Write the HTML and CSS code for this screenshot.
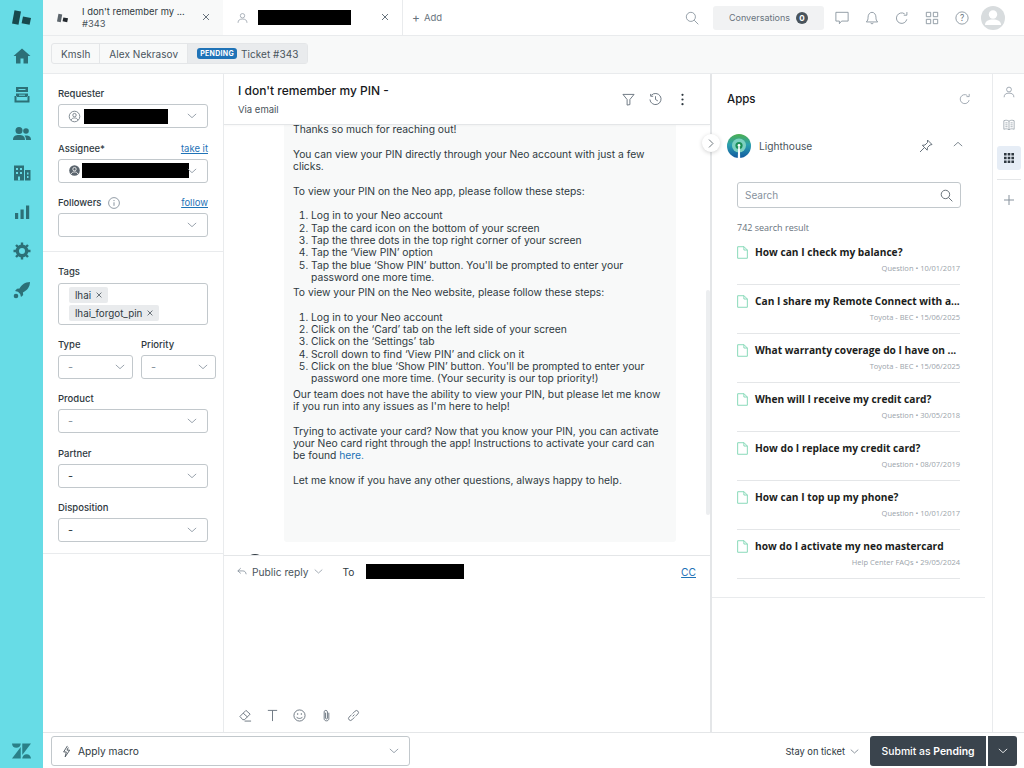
FILE: index.html
```html
<!DOCTYPE html>
<html lang="en">
<head>
<meta charset="utf-8">
<title>Ticket #343</title>
<link rel="stylesheet" href="styles.css">
</head>
<body>
<svg class="defs" aria-hidden="true">
  <symbol id="chev" viewBox="0 0 12 12"><path d="M1 3.500l5 4.500 5-4.500" fill="none" stroke="currentColor" stroke-width="1"/></symbol>
  <symbol id="x" viewBox="0 0 10 10"><path d="M2 2l6 6M8 2l-6 6" fill="none" stroke="currentColor" stroke-width="1"/></symbol>
  <symbol id="mag" viewBox="0 0 16 16"><circle cx="6.700" cy="6.700" r="5.200" fill="none" stroke="currentColor"/><path d="M10.500 10.500l4.700 4.700" stroke="currentColor" fill="none"/></symbol>
  <symbol id="refresh" viewBox="0 0 16 16"><path d="M13.500 9.500A6 6 0 1 1 11 3.200" fill="none" stroke="currentColor"/><path d="M13.600 1.200v3.600H10" fill="none" stroke="currentColor"/></symbol>
  <symbol id="person" viewBox="0 0 16 16"><circle cx="8" cy="4.700" r="3.200" fill="none" stroke="currentColor"/><path d="M1.500 15c0-4 2.500-5.500 6.500-5.500s6.500 1.500 6.500 5.500" fill="none" stroke="currentColor"/></symbol>
  <symbol id="docsym" viewBox="0 0 12 14"><path d="M.7.7h7l3.600 3.600v9H.7z" fill="none" stroke="#7fd6b4"/><path d="M7.500.7v3.600h3.800" fill="none" stroke="#7fd6b4"/></symbol>
</svg>
<div class="app">
  <nav class="side">
    <svg class="logo" viewBox="11 10 19 15"><path d="M13.500 10.300L20 11.500 17.500 24.800 11 23.500z" fill="#17494d"/><path d="M22 16.500l8 1.500-1.400 6.800-8-1.500z" fill="#17494d"/></svg>
    <svg class="nav-ic" viewBox="0 0 18 18"><path d="M9 1.500L0.500 9h2.500v7.500h4.500v-5h3v5H15V9h2.500z" fill="#2c7077"/></svg>
    <svg class="nav-ic" viewBox="0 0 18 18"><path d="M3 1h12v5H3zM3 7.500h12V11H3zM1.500 10v6.500h15V10h-2v4.500h-11V10z" fill="#2c7077"/><path d="M5.500 3.500h7M6 9.200h6" stroke="#67dce6"/></svg>
    <svg class="nav-ic" viewBox="0 0 18 18"><circle cx="6" cy="5.500" r="3.500" fill="#2c7077"/><circle cx="13" cy="6" r="2.800" fill="#2c7077"/><path d="M0 15c0-4 2.500-5 6-5s6 1 6 5zM13 15h5c0-3.500-2-4.500-5-4.500-1 0-1.500.2-1.500.2 1 1 1.500 2.500 1.500 4.300z" fill="#2c7077"/></svg>
    <svg class="nav-ic" viewBox="0 0 18 18"><path d="M1 1.500h10v15H1zM12 6h5.500v10.500H12z" fill="#2c7077"/><path d="M3 4h2v2H3zM7 4h2v2H7zM3 8h2v2H3zM7 8h2v2H7zM5 12.500h2v4H5zM14 8.500h1.500v2H14zM14 12h1.500v2H14z" fill="#67dce6"/></svg>
    <svg class="nav-ic" viewBox="0 0 18 18"><path d="M2 10h3.200v6H2zM7.500 6.500h3.200V16H7.500zM13 2.500h3.200V16H13z" fill="#2c7077"/></svg>
    <svg class="nav-ic" viewBox="0 0 18 18"><circle cx="9" cy="9" r="4.700" fill="none" stroke="#2c7077" stroke-width="3.400"/><path d="M9 .5v3M9 14.500v3M.5 9h3M14.500 9h3M3 3l2.200 2.200M12.800 12.800L15 15M3 15l2.200-2.200M12.800 5.200L15 3" stroke="#2c7077" stroke-width="2.400"/></svg>
    <svg class="nav-ic" viewBox="0 0 18 18"><path d="M17 1c-5 .2-8 2.500-10.500 6.500L4 7.800 2 10l3 .8 2.200 2.200.8 3 2.200-2-.3-2.500C14.500 9 16.800 6 17 1z" fill="#2c7077"/><circle cx="3" cy="15" r="2.300" fill="#2c7077"/></svg>
    <svg class="zlogo" viewBox="0 0 20 16"><path d="M9.200 3.800V16H0zM9.200 0c0 2.600-2 4.700-4.600 4.700S0 2.600 0 0zM10.800 16c0-2.600 2-4.700 4.600-4.700S20 13.400 20 16zM10.800 12.200V0H20z" fill="#2a8088"/></svg>
  </nav>
  <div class="main">
    <header class="topbar">
      <div class="tab tab-active">
        <svg class="tab-logo" viewBox="11 10 19 15"><path d="M13.500 10.300L20 11.500 17.500 24.800 11 23.500z" fill="#5d666d"/><path d="M22 16.500l8 1.500-1.400 6.800-8-1.500z" fill="#23292e"/></svg>
        <div class="tab-text"><div class="tab-title">I don't remember my ...</div><div class="tab-sub">#343</div></div>
        <svg class="tab-x"><use href="#x"/></svg>
      </div>
      <div class="tab tab-user">
        <svg class="tab-person"><use href="#person"/></svg>
        <span class="redact redact-tab"></span>
        <svg class="tab-x"><use href="#x"/></svg>
      </div>
      <div class="add"><span class="plus">+</span> Add</div>
      <div class="top-right">
        <svg class="top-ic"><use href="#mag"/></svg>
        <div class="conv">Conversations <span class="conv-badge">0</span></div>
        <svg class="top-ic" viewBox="0 0 16 16"><path d="M1 1.500h14v10H7.500L5 14.500v-3H1z" fill="none" stroke="currentColor"/></svg>
        <svg class="top-ic" viewBox="0 0 16 16"><path d="M1.500 12.500c1.500-1.500 2-2.500 2-5.500S5.500 1.500 8 1.500 12.500 4 12.500 7s.5 4 2 5.500zM6.500 13.500c.3 1.500 2.700 1.500 3 0" fill="none" stroke="currentColor"/></svg>
        <svg class="top-ic"><use href="#refresh"/></svg>
        <svg class="top-ic" viewBox="0 0 16 16"><path d="M1.500 1.500h5v5h-5zM9.500 1.500h5v5h-5zM1.500 9.500h5v5h-5zM9.500 9.500h5v5h-5z" fill="none" stroke="currentColor"/></svg>
        <svg class="top-ic" viewBox="0 0 16 16"><circle cx="8" cy="8" r="7" fill="none" stroke="currentColor"/><text x="8" y="11.500" class="q">?</text></svg>
        <div class="avatar"><svg viewBox="0 0 24 24"><circle cx="12" cy="8.500" r="4.200" fill="#fff"/><path d="M4 19c0-4 3.500-5.500 8-5.500s8 1.500 8 5.500z" fill="#fff"/></svg></div>
      </div>
    </header>
    <div class="crumbbar">
      <div class="crumbs">
        <span class="crumb">Kmslh</span>
        <span class="crumb">Alex Nekrasov</span>
        <span class="crumb crumb-cur"><span class="pending">PENDING</span> Ticket #343</span>
      </div>
    </div>
    <div class="work">
      <aside class="props">
        <div class="sec sec-a">
          <div class="field">
            <div class="lab">Requester</div>
            <div class="sel"><svg class="sel-person" viewBox="0 0 16 16"><circle cx="8" cy="8" r="6.500" fill="none" stroke="#68737d"/><circle cx="8" cy="6.300" r="2.100" fill="none" stroke="#68737d"/><path d="M3.800 12.500c.8-2 2.200-2.700 4.200-2.700s3.400.7 4.200 2.700" fill="none" stroke="#68737d"/></svg><span class="redact redact-req"></span><svg class="chev"><use href="#chev"/></svg></div>
          </div>
          <div class="field">
            <div class="lab lab-row"><span>Assignee*</span><a class="lnk">take it</a></div>
            <div class="sel"><svg class="sel-person" viewBox="0 0 16 16"><circle cx="8" cy="8" r="6.500" fill="#5a646d"/><circle cx="8" cy="6.300" r="2.100" fill="none" stroke="#fff"/><path d="M3.800 12.500c.8-2 2.200-2.700 4.200-2.700s3.400.7 4.200 2.700" fill="none" stroke="#fff"/></svg><span class="redact redact-asg"></span><svg class="chev"><use href="#chev"/></svg></div>
          </div>
          <div class="field">
            <div class="lab lab-row"><span class="lab-info">Followers <svg class="info" viewBox="0 0 12 12"><circle cx="6" cy="6" r="5.400" fill="none" stroke="#87929d" stroke-width=".9"/><path d="M6 5.300v3.500M6 3v1.100" stroke="#87929d"/></svg></span><a class="lnk">follow</a></div>
            <div class="sel"><svg class="chev"><use href="#chev"/></svg></div>
          </div>
        </div>
        <div class="sec sec-b">
          <div class="field field-tags">
            <div class="lab">Tags</div>
            <div class="tagbox">
              <span class="tag">lhai <svg class="tag-x"><use href="#x"/></svg></span>
              <span class="tag">lhai_forgot_pin <svg class="tag-x"><use href="#x"/></svg></span>
            </div>
          </div>
          <div class="two">
            <div class="field"><div class="lab">Type</div><div class="sel sel-dash">-<svg class="chev"><use href="#chev"/></svg></div></div>
            <div class="field"><div class="lab">Priority</div><div class="sel sel-dash">-<svg class="chev"><use href="#chev"/></svg></div></div>
          </div>
          <div class="field"><div class="lab">Product</div><div class="sel sel-dash">-<svg class="chev"><use href="#chev"/></svg></div></div>
          <div class="field"><div class="lab">Partner</div><div class="sel sel-dash sel-dark">-<svg class="chev"><use href="#chev"/></svg></div></div>
          <div class="field"><div class="lab">Disposition</div><div class="sel sel-dash sel-dark">-<svg class="chev"><use href="#chev"/></svg></div></div>
        </div>
      </aside>
      <section class="center">
        <div class="thead">
          <div>
            <h1 class="ttitle">I don't remember my PIN -</h1>
            <div class="via">Via email</div>
          </div>
          <div class="tools">
            <svg class="tool" viewBox="0 0 14 14"><path d="M1 1.500h12L8.500 7v5.500L5.500 13V7z" fill="none" stroke="currentColor"/></svg>
            <svg class="tool" viewBox="0 0 14 14"><path d="M2.500 2.500A6 6 0 1 1 1 7" fill="none" stroke="currentColor"/><path d="M1.800 1v2.500h2.700M7 3.500V7l2.500 1.500" fill="none" stroke="currentColor"/></svg>
            <svg class="tool tool-dots" viewBox="0 0 14 14"><circle cx="7" cy="2" r="1.200"/><circle cx="7" cy="7" r="1.200"/><circle cx="7" cy="12" r="1.200"/></svg>
          </div>
        </div>
        <div class="log">
          <div class="bubble">
            <p>Thanks so much for reaching out!</p>
            <p>You can view your PIN directly through your Neo account with just a few clicks.</p>
            <p>To view your PIN on the Neo app, please follow these steps:</p>
            <ol>
              <li>Log in to your Neo account</li>
              <li>Tap the card icon on the bottom of your screen</li>
              <li>Tap the three dots in the top right corner of your screen</li>
              <li>Tap the ‘View PIN’ option</li>
              <li>Tap the blue ‘Show PIN’ button. You'll be prompted to enter your password one more time.</li>
            </ol>
            <p>To view your PIN on the Neo website, please follow these steps:</p>
            <ol>
              <li>Log in to your Neo account</li>
              <li>Click on the ‘Card’ tab on the left side of your screen</li>
              <li>Click on the ‘Settings’ tab</li>
              <li>Scroll down to find ‘View PIN’ and click on it</li>
              <li>Click on the blue ‘Show PIN’ button. You'll be prompted to enter your password one more time. (Your security is our top priority!)</li>
            </ol>
            <p>Our team does not have the ability to view your PIN, but please let me know if you run into any issues as I'm here to help!</p>
            <p>Trying to activate your card? Now that you know your PIN, you can activate your Neo card right through the app! Instructions to activate your card can be found <a class="inl">here.</a></p>
            <p>Let me know if you have any other questions, always happy to help.</p>
          </div>
          <span class="log-avatar"></span>
          <span class="scroll"></span>
        </div>
        <div class="composer">
          <div class="reply-row">
            <svg class="reply-ic" viewBox="0 0 12 10"><path d="M4.500 1L1 4.300l3.500 3M1 4.300h6c2.500 0 3.500 1.500 4 4" fill="none" stroke="#87929d"/></svg>
            <span class="reply-type">Public reply</span>
            <svg class="reply-chev"><use href="#chev"/></svg>
            <span class="to">To</span>
            <span class="redact redact-to"></span>
            <a class="lnk cc">CC</a>
          </div>
          <div class="editor">
            <svg class="ed" viewBox="0 0 14 14"><path d="M1 8l6.500-6.500 4.500 4L6 11.500H4zM4.500 4.500l4.500 4M6 13h7" fill="none" stroke="currentColor"/></svg>
            <svg class="ed" viewBox="0 0 14 14"><path d="M2 1.500h10M7 1.500V13" fill="none" stroke="currentColor"/></svg>
            <svg class="ed" viewBox="0 0 14 14"><circle cx="7" cy="7" r="6" fill="none" stroke="currentColor"/><circle cx="5" cy="5.500" r=".8" fill="currentColor"/><circle cx="9" cy="5.500" r=".8" fill="currentColor"/><path d="M3.800 8.500c1 2.200 5.400 2.200 6.400 0" fill="none" stroke="currentColor"/></svg>
            <svg class="ed" viewBox="0 0 14 14"><path d="M9.500 4v6.500c0 3-5 3-5 0V3c0-2 3.500-2 3.500 0v7c0 1-2 1-2 0V4" fill="none" stroke="currentColor"/></svg>
            <svg class="ed" viewBox="0 0 14 14"><path d="M6 8l2-2M5 6L2.300 8.700a2 2 0 0 0 3 3L8 9M6 5l2.700-2.700a2 2 0 0 1 3 3L9 8" fill="none" stroke="currentColor"/></svg>
          </div>
        </div>
        <span class="expand"><svg viewBox="0 0 10 14"><path d="M2.500 2l5 5-5 5" fill="none" stroke="#49545c"/></svg></span>
      </section>
      <section class="apps">
        <div class="apps-in">
          <div class="apps-head"><span class="apps-title">Apps</span><svg class="apps-refresh"><use href="#refresh"/></svg></div>
          <div class="lh">
            <svg class="lh-logo" viewBox="0 0 24 24"><defs><linearGradient id="lhg" x1="0" y1="0" x2="0" y2="1"><stop offset="0" stop-color="#4caf50"/><stop offset=".45" stop-color="#2a9fb0"/><stop offset="1" stop-color="#12599f"/></linearGradient></defs><circle cx="12" cy="12" r="12" fill="url(#lhg)"/><circle cx="12" cy="11.500" r="7" fill="#7cd0c0"/><circle cx="12" cy="11.500" r="3.600" fill="#1c8f57"/><circle cx="12" cy="11.500" r="1.400" fill="#fff"/><path d="M11.200 13h1.600l.4 11h-2.400z" fill="#fff"/></svg>
            <span class="lh-name">Lighthouse</span>
            <svg class="pin" viewBox="0 0 14 14"><path d="M8.500 1l4.500 4.500-2 .5-2.500 2.500-.3 2.700L3.300 6.300l2.700-.3L8.500 3.500zM5.300 8.700L1 13" fill="none" stroke="#68737d"/></svg>
            <svg class="up"><use href="#chev"/></svg>
          </div>
          <div class="search"><span>Search</span><svg class="search-ic"><use href="#mag"/></svg></div>
          <div class="count">742 search result</div>
          <ul class="results">
            <li class="res"><div class="res-t"><svg class="doc"><use href="#docsym"/></svg><span>How can I check my balance?</span></div><div class="res-m">Question • 10/01/2017</div></li>
            <li class="res"><div class="res-t"><svg class="doc"><use href="#docsym"/></svg><span>Can I share my Remote Connect with a...</span></div><div class="res-m">Toyota - BEC • 15/06/2025</div></li>
            <li class="res"><div class="res-t"><svg class="doc"><use href="#docsym"/></svg><span>What warranty coverage do I have on ...</span></div><div class="res-m">Toyota - BEC • 15/06/2025</div></li>
            <li class="res"><div class="res-t"><svg class="doc"><use href="#docsym"/></svg><span>When will I receive my credit card?</span></div><div class="res-m">Question • 30/05/2018</div></li>
            <li class="res"><div class="res-t"><svg class="doc"><use href="#docsym"/></svg><span>How do I replace my credit card?</span></div><div class="res-m">Question • 08/07/2019</div></li>
            <li class="res"><div class="res-t"><svg class="doc"><use href="#docsym"/></svg><span>How can I top up my phone?</span></div><div class="res-m">Question • 10/01/2017</div></li>
            <li class="res"><div class="res-t"><svg class="doc"><use href="#docsym"/></svg><span>how do I activate my neo mastercard</span></div><div class="res-m">Help Center FAQs • 29/05/2024</div></li>
          </ul>
        </div>
      </section>
      <aside class="rail">
        <svg class="rail-ic"><use href="#person"/></svg>
        <svg class="rail-ic" viewBox="0 0 14 14"><path d="M1 2c2-.8 4-.8 6 .5 2-1.300 4-1.300 6-.5v10c-2-.8-4-.8-6 .5-2-1.300-4-1.300-6-.5zM7 2.500v10M2.800 4.500h2.500M2.800 6.800h2.500M2.800 9h2.500M8.800 4.500h2.500M8.800 6.800h2.500M8.800 9h2.500" fill="none" stroke="#87929d" stroke-width=".8"/></svg>
        <div class="rail-cur"><svg viewBox="0 0 12 12"><path d="M1 1h2.600v2.600H1zM4.700 1h2.600v2.600H4.700zM8.400 1H11v2.600H8.400zM1 4.700h2.600v2.600H1zM4.700 4.700h2.600v2.600H4.700zM8.400 4.700H11v2.600H8.400zM1 8.400h2.600V11H1zM4.700 8.400h2.600V11H4.700zM8.400 8.400H11V11H8.400z" fill="#2f3941"/></svg></div>
        <div class="rail-div"></div>
        <svg class="rail-plus" viewBox="0 0 12 12"><path d="M6 1v10M1 6h10" stroke="#87929d" fill="none"/></svg>
      </aside>
    </div>
    <footer class="foot">
      <div class="macro">
        <svg class="bolt" viewBox="0 0 10 14"><path d="M6 .8L1.800 7.500h3L3.500 13 8.500 5.500h-3l1.500-3" fill="none" stroke="#49545c"/></svg>
        <span>Apply macro</span>
        <svg class="chev"><use href="#chev"/></svg>
      </div>
      <div class="stay">Stay on ticket <svg class="stay-chev"><use href="#chev"/></svg></div>
      <div class="submit">
        <span class="sub-main">Submit as <b>Pending</b></span>
        <span class="sub-more"><svg class="sub-chev"><use href="#chev"/></svg></span>
      </div>
    </footer>
  </div>
</div>
</body>
</html>
```

FILE: styles.css
```css
* { box-sizing: border-box; }
html, body { margin: 0; padding: 0; height: 100%; }
body { font-family: Inter, "Liberation Sans", sans-serif; font-size: 11px; color: #2f3941; background: #fff; overflow: hidden; }
.defs { position: absolute; width: 0; height: 0; }
.app { display: flex; width: 1024px; height: 768px; }

.side { width: 43px; flex: none; background: #67dce6; display: flex; flex-direction: column; align-items: center; padding-top: 10px; }
.logo { width: 19px; height: 15px; margin-bottom: 22px; }
.nav-ic { width: 18px; height: 18px; margin-bottom: 21px; }
.zlogo { width: 19px; height: 16px; margin-top: auto; margin-bottom: 9px; }

.main { flex: 1; display: flex; flex-direction: column; min-width: 0; }

.topbar { height: 36px; flex: none; display: flex; border-bottom: 1px solid #e9ebed; background: #fff; }
.tab { display: flex; align-items: center; height: 35px; position: relative; }
.tab-active { width: 180px; background: #f8f9f9; padding-left: 14px; }
.tab-user { width: 180px; padding-left: 14px; border-right: 1px solid #e9ebed; }
.tab-logo { width: 11px; height: 10px; margin-right: 14px; flex: none; }
.tab-text { font-size: 9.400px; line-height: 12px; color: #2f3941; }
.tab-sub { color: #49545c; }
.tab-x { position: absolute; right: 12px; top: 12px; width: 10px; height: 10px; color: #68737d; }
.tab-person { width: 11px; height: 12px; color: #87929d; margin-right: 10px; flex: none; }
.redact { display: block; background: #000; flex: none; }
.redact-tab { width: 93px; height: 15px; }
.add { display: flex; align-items: center; gap: 4px; padding-left: 9px; font-size: 9.500px; color: #68737d; height: 35px; }
.plus { font-size: 12px; }
.top-right { margin-left: auto; display: flex; align-items: center; height: 35px; padding-right: 19px; color: #87929d; }
.top-ic { width: 14px; height: 14px; color: #87929d; margin-right: 16px; }
.top-right .top-ic:first-child { margin-right: 14px; }
.q { font-family: Inter, sans-serif; font-size: 9.500px; text-anchor: middle; fill: #68737d; }
.conv { width: 111px; height: 24px; background: #f1f2f3; border-radius: 3px; margin-right: 11px; display: flex; align-items: center; justify-content: center; gap: 6px; font-size: 9px; color: #68737d; }
.conv-badge { width: 12px; height: 12px; border-radius: 50%; background: #49545c; color: #fff; font-size: 8px; font-weight: 700; display: flex; align-items: center; justify-content: center; }
.avatar { width: 24px; height: 24px; border-radius: 50%; background: #d8dcde; margin-left: -4px; }
.avatar svg { display: block; width: 24px; height: 24px; }

.crumbbar { height: 38px; flex: none; background: #f8f9f9; border-bottom: 1px solid #e9ebed; padding: 7px 0 0 8px; }
.crumbs { display: inline-flex; height: 21px; border: 1px solid #e4e6e8; border-radius: 3px; background: #f8f9f9; font-size: 10px; letter-spacing: .05px; color: #49545c; }
.crumb { display: flex; align-items: center; padding: 0 9px; border-right: 1px solid #e4e6e8; }
.crumb-cur { background: #e9ebed; border-right: 0; gap: 4px; }
.pending { background: #1f73b7; color: #fff; font-size: 7px; font-weight: 700; border-radius: 3px; padding: 0 3px; height: 11px; line-height: 11px; letter-spacing: .3px; }

.work { flex: 1; display: flex; min-height: 0; }

.props { width: 181px; flex: none; border-right: 1px solid #e9ebed; background: #fff; }
.sec { padding: 0 15px; border-bottom: 1px solid #e9ebed; }
.sec-a { padding-top: 13px; height: 178px; }
.sec-b { padding-top: 13px; height: 302px; }
.field { margin-bottom: 13.500px; }
.field-tags { margin-bottom: 13px; }
.lab { font-size: 9.500px; line-height: 13px; color: #2f3941; font-weight: 500; margin-bottom: 4px; }
.field-tags .lab { margin-bottom: 5px; }
.lab-row { display: flex; justify-content: space-between; align-items: center; }
.lab-info { display: flex; align-items: center; gap: 7px; }
.info { width: 12px; height: 12px; }
.lnk { color: #1f73b7; text-decoration: underline; font-weight: 400; }
.sel { height: 24px; border: 1px solid #c2c8cc; border-radius: 3px; display: flex; align-items: center; padding: 0 7px 0 9px; position: relative; background: #fff; }
.sel-person { width: 13px; height: 13px; margin-right: 3px; flex: none; }
.redact-req { width: 84px; height: 15px; }
.redact-asg { width: 107px; height: 15px; margin-left: -2px; }
.chev { width: 10px; height: 10px; color: #87929d; flex: none; position: absolute; right: 10px; top: 6px; }
.sel-dash { padding-left: 9px; color: #87929d; font-size: 11px; }
.sel-dark { color: #2f3941; }
.tagbox { height: 42px; border: 1px solid #c2c8cc; border-radius: 3px; padding: 3px 10px; display: flex; flex-wrap: wrap; align-items: flex-start; gap: 2px 40px; }
.tag { display: inline-flex; align-items: center; gap: 4px; height: 16px; background: #e9ebed; border-radius: 2px; padding: 0 5px 0 6px; font-size: 9.800px; color: #2f3941; }
.tag-x { width: 8px; height: 8px; color: #49545c; }
.two { display: flex; gap: 8px; width: 158px; }
.two .field { width: 75px; flex: none; margin-bottom: 13px; }
.two .chev { right: 7px; }

.center { width: 488px; flex: none; display: flex; flex-direction: column; border-right: 2px solid #e4e6e8; position: relative; min-width: 0; }
.thead { height: 51px; flex: none; border-bottom: 1px solid #e4e6e8; display: flex; justify-content: space-between; padding: 9px 21px 0 14px; box-shadow: 0 1px 2px rgba(0,0,0,.03); position: relative; z-index: 1; background: #fff; }
.ttitle { margin: 0; font-size: 12px; line-height: 16px; font-weight: 500; color: #17191c; }
.via { font-size: 9.500px; color: #49545c; margin-top: 4px; line-height: 13px; }
.tools { display: flex; gap: 14px; align-items: center; padding-top: 2px; height: 30px; }
.tool { width: 13px; height: 13px; color: #68737d; }
.tool-dots { fill: #2f3941; }
.log { height: 431px; flex: none; position: relative; overflow: hidden; padding-left: 60px; border-bottom: 1px solid #e4e6e8; }
.bubble { width: 392px; height: 419px; margin-top: -2px; background: #f8f9f9; padding: 0 13px 0 9px; font-size: 10.300px; line-height: 12.300px; color: #2f3941; border-radius: 0 0 3px 3px; }
.bubble p { margin: 0 0 12.400px; }
.bubble ol { margin: 0 0 3px; padding: 0 0 0 18px; }
.inl { color: #1f73b7; }
.log-avatar { position: absolute; left: 21px; top: 429px; width: 20px; height: 20px; background: #2f3941; border-radius: 50%; }
.scroll { position: absolute; right: 0; top: 165px; width: 4px; height: 225px; background: #eceef0; border-radius: 2px; }
.composer { flex: 1; display: flex; flex-direction: column; min-height: 0; }
.reply-row { height: 31px; display: flex; align-items: center; padding: 0 14px 0 13px; font-size: 10.200px; color: #49545c; }
.reply-ic { width: 10px; height: 9px; margin-right: 5px; }
.reply-chev { width: 9px; height: 9px; color: #87929d; margin-left: 6px; }
.to { margin-left: 19px; color: #2f3941; }
.redact-to { width: 98px; height: 15px; margin-left: 12px; }
.cc { margin-left: auto; }
.editor { margin-top: auto; display: flex; gap: 14px; padding: 0 0 10px 15px; color: #68737d; }
.ed { width: 13px; height: 13px; }
.expand { position: absolute; right: -10px; top: 60px; width: 18px; height: 18px; background: #fff; border-radius: 50%; box-shadow: 0 1px 4px rgba(0,0,0,.18); display: flex; align-items: center; justify-content: center; z-index: 2; }
.expand svg { width: 8px; height: 11px; }

.apps { width: 281px; flex: none; border-right: 1px solid #e9ebed; }
.apps-in { height: 524px; border-bottom: 1px solid #e9ebed; margin-right: 7px; }
.apps-head { display: flex; justify-content: space-between; align-items: center; padding: 15px 14px 0 15px; height: 34px; }
.apps-title { font-size: 11.500px; font-weight: 500; color: #17191c; }
.apps-refresh { width: 12px; height: 12px; color: #87929d; }
.lh { display: flex; align-items: center; padding-left: 15px; height: 24px; margin-top: 26px; position: relative; }
.lh-logo { width: 24px; height: 24px; flex: none; }
.lh-name { margin-left: 8px; font-size: 10.200px; color: #49545c; }
.pin { width: 14px; height: 14px; position: absolute; left: 207px; top: 5px; }
.up { width: 10px; height: 10px; color: #68737d; transform: scaleY(-1); position: absolute; left: 241px; top: 5px; }
.search { margin: 24px 24px 0 25px; height: 26px; border: 1px solid #c2c8cc; border-radius: 3px; display: flex; align-items: center; justify-content: space-between; padding: 0 7px; font-size: 10px; color: #87929d; }
.search-ic { width: 13px; height: 13px; color: #49545c; }
.count { margin: 14px 0 0 25px; font-family: "Open Sans", sans-serif; font-size: 9px; line-height: 12px; color: #68737d; }
.results { list-style: none; margin: 2px 25px 0; padding: 0; }
.res { height: 49px; border-bottom: 1px solid #e4e6e8; padding-top: 9px; font-family: "Open Sans", sans-serif; }
.res-t { display: flex; align-items: center; font-size: 10.200px; line-height: 14px; font-weight: 700; color: #1b1d20; white-space: nowrap; }
.doc { width: 11px; height: 13px; margin-right: 7px; flex: none; }
.res-m { text-align: right; font-size: 7.500px; line-height: 11px; color: #9aa3aa; margin-top: 4px; }

.rail { flex: 1; display: flex; flex-direction: column; align-items: center; padding-top: 11px; position: relative; }
.rail-ic { width: 12px; height: 14px; margin-bottom: 19px; }
.rail-ic:first-child { color: #87929d; }
.rail-cur { width: 24px; height: 24px; background: #e6edf6; border-radius: 3px; display: flex; align-items: center; justify-content: center; margin-top: -5px; }
.rail-cur svg { width: 12px; height: 12px; }
.rail-div { width: 24px; height: 1px; background: #e4e6e8; margin-top: 9px; }
.rail-plus { width: 12px; height: 12px; margin-top: 14px; }

.foot { height: 36px; flex: none; border-top: 1px solid #e4e6e8; display: flex; align-items: center; padding: 1px 7px 0 8px; background: #fff; }
.macro { width: 359px; height: 30px; border: 1px solid #c2c8cc; border-radius: 3px; display: flex; align-items: center; padding-left: 10px; position: relative; font-size: 10.200px; color: #2f3941; }
.bolt { width: 9px; height: 13px; margin-right: 7px; }
.macro .chev { top: 9px; right: 10px; }
.stay { margin-left: auto; display: flex; align-items: center; gap: 5px; font-size: 9.300px; color: #2f3941; margin-right: 11px; }
.stay-chev { width: 9px; height: 9px; color: #68737d; }
.submit { display: flex; gap: 2px; height: 30px; }
.sub-main { width: 116px; background: #3a444d; color: #fff; border-radius: 3px 0 0 3px; display: flex; align-items: center; justify-content: center; font-size: 10.400px; font-weight: 500; white-space: pre; }
.sub-main b { font-weight: 600; }
.sub-more { width: 29px; background: #3a444d; border-radius: 0 3px 3px 0; display: flex; align-items: center; justify-content: center; color: #fff; }
.sub-chev { width: 10px; height: 10px; color: #fff; }
```
